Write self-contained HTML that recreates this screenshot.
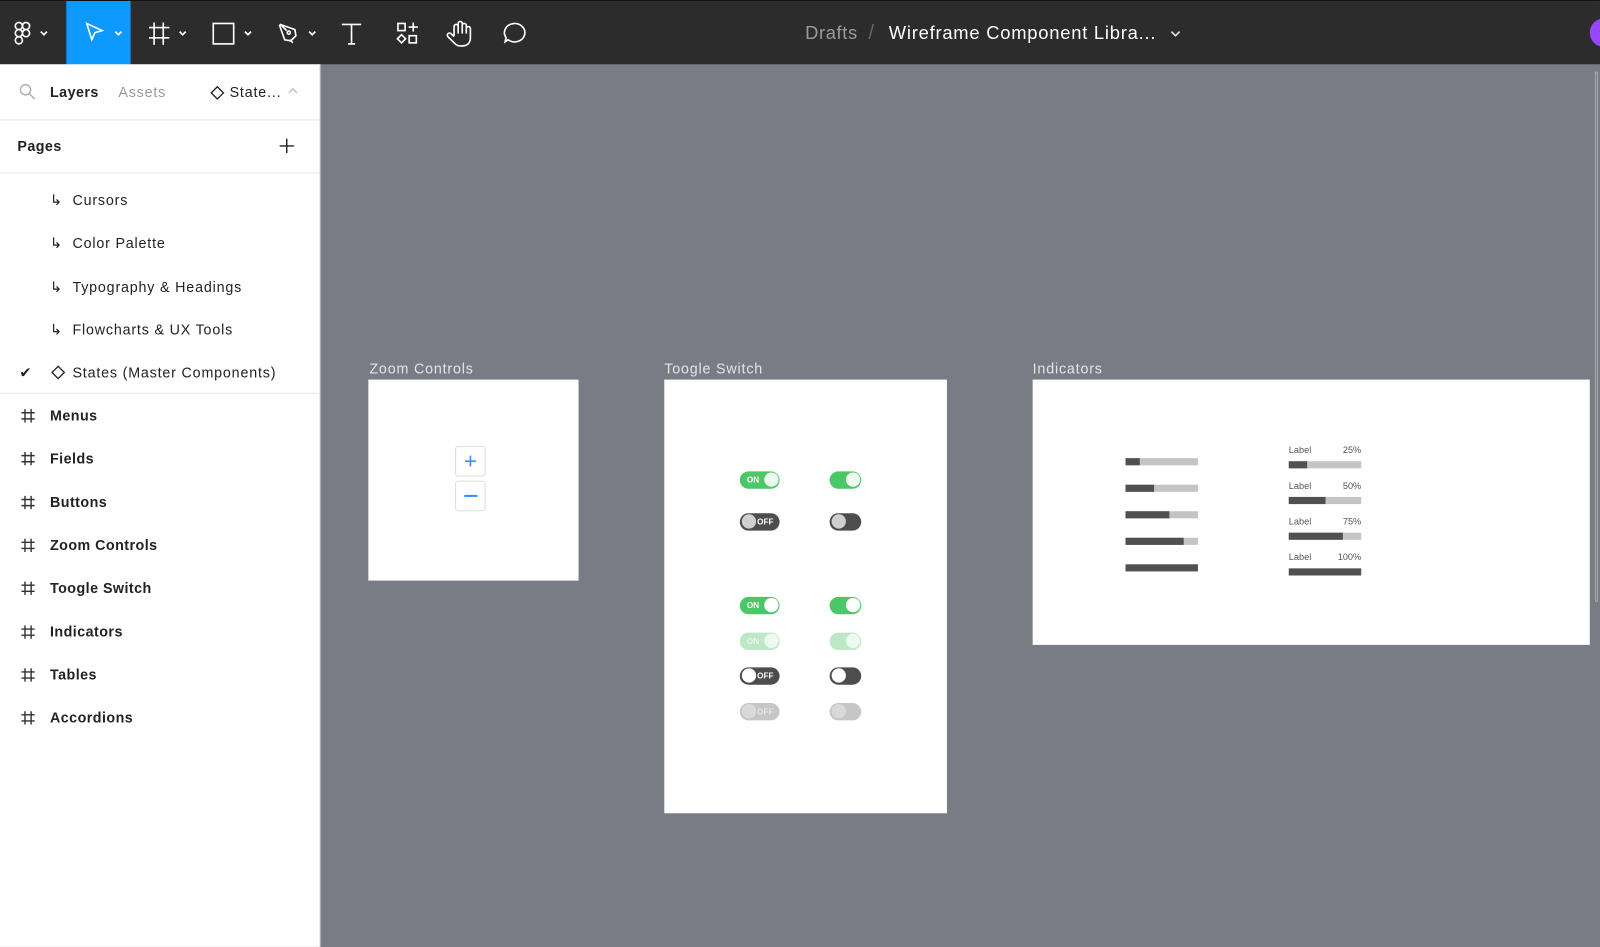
<!DOCTYPE html>
<html><head><meta charset="utf-8"><style>
*{margin:0;padding:0;box-sizing:border-box}
html,body{width:1600px;height:947px;overflow:hidden;background:#797c85}
#w{position:absolute;left:0;top:0;width:1568px;height:928px;transform:scale(1.0204);transform-origin:0 0;font-family:"Liberation Sans",sans-serif}
.a{position:absolute}
#tb{left:0;top:0;width:1568px;height:63px;background:#2c2c2c;border-top:1px solid #111}
#sb{left:0;top:63px;width:314px;height:865px;background:#fff;border-right:1px solid #ddd}
.it{position:absolute;font-size:14px;color:#222;line-height:16px;letter-spacing:0.8px}
.b{font-weight:bold;letter-spacing:0.45px}
.fr{position:absolute;background:#fff}
.fl{position:absolute;font-size:14px;color:#e4e4e6;letter-spacing:0.8px}
.tg{position:absolute;height:17px;border-radius:9px}
.kn{position:absolute;top:1.5px;width:14px;height:14px;border-radius:50%}
.tt{position:absolute;top:3px;font-size:8px;font-weight:bold;color:#fff;line-height:11px}
.bar{position:absolute;height:7px;background:#c4c4c4;width:71px}
.bar i{display:block;height:7px;background:#505050}
.lb{position:absolute;font-size:9px;color:#555;width:71px}
.lb span{float:right}
</style></head><body><div id="w">
<div id="tb" class="a">
 <div class="a" style="left:65px;top:0;width:63px;height:63px;background:#0d99ff"></div>
 <svg class="a" style="left:0;top:0" width="540" height="63" fill="none" stroke="#fff" stroke-width="1.6">
  <g><rect x="15" y="21" width="7" height="7" rx="3.5"/><rect x="22" y="21" width="7" height="7" rx="3.5"/><rect x="15" y="28" width="7" height="7" rx="3.5"/><circle cx="25.5" cy="31.5" r="3.5"/><rect x="15" y="35" width="7" height="7" rx="3.5"/></g>
  <path d="M40 30l3 3 3-3M113 30l3 3 3-3M176 30l3 3 3-3M240 30l3 3 3-3M303 30l3 3 3-3"/>
  <path d="M85 22l15 7-7 2-3 7z"/>
  <path d="M151 21v22M160 21v22M146 26h20M146 36h20"/>
  <rect x="209" y="22" width="20" height="20"/>
  <path d="M275 23l14 5 1 6-5 5-6-1-5-14zM275 23l6 6M284 38l3 3"/><circle cx="283" cy="31" r="1.5"/>
  <path d="M335 23h19M344.5 23v19M341 42h7"/>
  <rect x="390" y="22" width="7" height="7"/><path d="M405 21v9M400.5 25.5h9"/><path d="M393.5 33l4 4-4 4-4-4z"/><rect x="401" y="34" width="7" height="7"/>
  <path d="M445 34v-9a2 2 0 014 0v7M449 31v-9a2 2 0 014 0v9M453 32v-8a2 2 0 014 0v8M457 32v-5a2 2 0 014 0v9c0 5-3 8-8 8h-2c-3 0-5-2-7-4l-5-5a2 2 0 013-3l3 3"/>
  <path d="M495 40l1-4a10 9 0 112 2z"/>
 </svg>
 <div class="a" style="left:789px;top:21px;font-size:18px;color:#9a9a9a;letter-spacing:0.6px">Drafts</div>
 <div class="a" style="left:851px;top:20px;font-size:20px;color:#666">/</div>
 <div class="a" style="left:871px;top:21px;font-size:18px;color:#fff;letter-spacing:0.75px">Wireframe Component Libra...</div>
 <svg class="a" style="left:1146px;top:28px" width="12" height="8" fill="none" stroke="#ddd" stroke-width="1.6"><path d="M2 2l4 4 4-4"/></svg>
 <div class="a" style="left:1558px;top:17px;width:28px;height:28px;border-radius:50%;background:#9747ff"></div>
</div>
<div id="sb" class="a">
 <svg class="a" style="left:18px;top:18px" width="18" height="18" fill="none" stroke="#aaa" stroke-width="1.3"><circle cx="7" cy="7" r="5"/><path d="M11 11l5 5"/></svg>
 <div class="it b" style="left:49px;top:19px">Layers</div>
 <div class="it" style="left:116px;top:19px;color:#999">Assets</div>
 <svg class="a" style="left:205px;top:20px" width="16" height="16" fill="none" stroke="#222" stroke-width="1.3"><path d="M8 2l6 6-6 6-6-6z"/></svg>
 <div class="it" style="left:225px;top:19px">State...</div>
 <svg class="a" style="left:281px;top:22px" width="12" height="8" fill="none" stroke="#bbb" stroke-width="1.3"><path d="M2 6l4-4 4 4"/></svg>
 <div class="a" style="left:0;top:54px;width:313px;height:1px;background:#e5e5e5"></div>
 <div class="it b" style="left:17px;top:72px">Pages</div>
 <svg class="a" style="left:273px;top:72px" width="16" height="16" stroke="#222" stroke-width="1.4"><path d="M8 1v14M1 8h14"/></svg>
 <div class="a" style="left:0;top:106px;width:313px;height:1px;background:#e5e5e5"></div>
 <div class="a" style="left:0;top:322px;width:313px;height:1px;background:#e5e5e5"></div>
</div>
<div id="pg"></div>
<div class="fl" style="left:362px;top:353px">Zoom Controls</div>
<div class="fr" style="left:361px;top:372px;width:206px;height:197px"></div>
<div class="a" style="left:446px;top:437px;width:30px;height:30px;border:1px solid #ddd;border-radius:3px;background:#fff;color:#3a8ef5;font-size:22px;text-align:center;line-height:27px">+</div>
<div class="a" style="left:446px;top:471px;width:30px;height:30px;border:1px solid #ddd;border-radius:3px;background:#fff"><div class="a" style="left:8px;top:13px;width:13px;height:2px;background:#3a8ef5"></div></div>
<div class="fl" style="left:651px;top:353px">Toogle Switch</div>
<div class="fr" style="left:651px;top:372px;width:277px;height:425px"></div>
<div class="fl" style="left:1012px;top:353px">Indicators</div>
<div class="fr" style="left:1012px;top:372px;width:546px;height:260px"></div>
<div class="a" style="left:1563px;top:70px;width:3px;height:520px;border:1px solid #aaa;border-radius:2px"></div>
<div id="tg"></div>
<div id="ind"></div>
</div>
<script>
var pg=document.getElementById('pg'),h='';
var sub=['Cursors','Color Palette','Typography &amp; Headings','Flowcharts &amp; UX Tools'];
sub.forEach(function(t,i){var y=188+i*42.3;h+='<div class="it" style="left:49px;top:'+y+'px">↳</div><div class="it" style="left:71px;top:'+y+'px">'+t+'</div>';});
h+='<div class="it" style="left:19px;top:357px">✔</div><svg class="a" style="left:49px;top:357px" width="16" height="16" fill="none" stroke="#222" stroke-width="1.3"><path d="M8 2l6 6-6 6-6-6z"/></svg><div class="it" style="left:71px;top:357px">States (Master Components)</div>';
['Menus','Fields','Buttons','Zoom Controls','Toogle Switch','Indicators','Tables','Accordions'].forEach(function(t,i){var y=399+i*42.3;h+='<svg class="a" style="left:20px;top:'+(y+1)+'px" width="15" height="15" stroke="#333" stroke-width="1.4"><path d="M4.5 1v13M10.5 1v13M1 4.5h13M1 10.5h13"/></svg><div class="it b" style="left:49px;top:'+y+'px">'+t+'</div>';});
pg.innerHTML=h;
var g='',G='#4cc767',LG='#bde8c6',D='#4d4d4d',L='#c6c6c6';
function tg(x,y,w,bg,on,txt,kn,tc,bd){var kx=on?w-15.5:1.5;g+='<div class="tg" style="left:'+x+'px;top:'+(y-8.5)+'px;width:'+w+'px;background:'+bg+'"><div class="kn" style="left:'+kx+'px;background:'+kn+(bd?';border:1px solid '+bd:'')+'"></div>'+(txt?'<div class="tt" style="'+(on?'left:7px':'left:17px')+';color:'+tc+'">'+txt+'</div>':'')+'</div>';}
tg(725,470,39,G,1,'ON','#eefaf1','#fff');tg(813,470,31,G,1,'','#eefaf1');
tg(725,511,39,D,0,'OFF','#d0d0d0','#fff');tg(813,511,31,D,0,'','#d0d0d0');
tg(725,593,39,G,1,'ON','#fff','#fff');tg(813,593,31,G,1,'','#fff');
tg(725,628,39,LG,1,'ON','#eefaf1','#e8f7ec');tg(813,628,31,LG,1,'','#eefaf1');
tg(725,662,39,D,0,'OFF','#fff','#fff');tg(813,662,31,D,0,'','#fff');
tg(725,697,39,L,0,'OFF','#d9d9d9','#e5e5e5');tg(813,697,31,L,0,'','#d9d9d9');
document.getElementById('tg').innerHTML=g;
var s='';[14,28,43,57,71].forEach(function(f,i){s+='<div class="bar" style="left:1103px;top:'+(449+i*26)+'px"><i style="width:'+f+'px"></i></div>';});
[['25%',18],['50%',36],['75%',53],['100%',71]].forEach(function(p,i){var y=452+i*35;s+='<div class="lb" style="left:1263px;top:'+(y-16)+'px">Label<span>'+p[0]+'</span></div><div class="bar" style="left:1263px;top:'+y+'px"><i style="width:'+p[1]+'px"></i></div>';});
document.getElementById('ind').innerHTML=s;
</script>
</body></html>
